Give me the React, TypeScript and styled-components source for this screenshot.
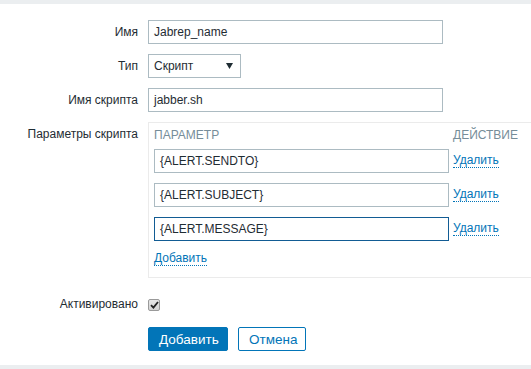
import { Fragment } from 'react';
import styled, { createGlobalStyle } from 'styled-components';

const GlobalStyle = createGlobalStyle`
  html, body {
    margin: 0;
    padding: 0;
    overflow: hidden;
    background-color: #ebeef0;
    font-family: "Liberation Sans", Arial, sans-serif;
    font-size: 12px;
    color: #1f2c33;
  }
`;

const Panel = styled.div`
  margin-top: 4px;
  height: 361px;
  box-sizing: border-box;
  background-color: #fff;
  padding-top: 16px;
  overflow: hidden;
`;

const Form = styled.div`
  display: grid;
  grid-template-columns: 138px 1fr;
  column-gap: 10px;
  row-gap: 10px;
`;

const Label = styled.div<{ $offset?: number }>`
  text-align: right;
  line-height: 24px;
  white-space: nowrap;
  margin-top: ${(p) => p.$offset || 0}px;
`;

const Field = styled.div<{ $offset?: number }>`
  display: flex;
  align-items: center;
  min-height: 24px;
  margin-top: ${(p) => p.$offset || 0}px;
`;

const TextBox = styled.div<{ $width: number; $focused?: boolean }>`
  box-sizing: border-box;
  width: ${(p) => p.$width}px;
  height: 24px;
  line-height: 22px;
  padding: 0 5px;
  border: 1px solid ${(p) => (p.$focused ? '#125c94' : '#acbbc2')};
  background: #fff;
  white-space: nowrap;
`;

const Select = styled.div`
  box-sizing: border-box;
  width: 93px;
  height: 24px;
  padding: 0 7px 0 5px;
  border: 1px solid #acbbc2;
  display: flex;
  align-items: center;
  justify-content: space-between;
`;

const ParamBox = styled.div`
  box-sizing: border-box;
  width: 420px;
  border: 1px solid #ebebeb;
  padding: 4px 0 11px 5px;
`;

const ParamGrid = styled.div`
  display: grid;
  grid-template-columns: 295px 1fr;
  column-gap: 4px;
  row-gap: 10px;
  align-items: center;
`;

const HeadCell = styled.div`
  line-height: 16px;
  margin-bottom: -4px;
  color: #768d99;
  text-transform: uppercase;
`;

const Link = styled.span`
  color: #0275b8;
  border-bottom: 1px dotted #0275b8;
  line-height: 13px;
  justify-self: start;
`;

const AddLink = styled(Link)`
  display: inline-block;
  margin-top: 1px;
`;

const Check = styled.div`
  box-sizing: border-box;
  width: 12px;
  height: 12px;
  margin-top: 1px;
  border: 1px solid #9a9a9a;
  border-radius: 2px;
  background: linear-gradient(#e6e6e6, #d4d4d4);
  display: flex;
  align-items: center;
  justify-content: center;
`;

const Buttons = styled.div`
  display: flex;
  gap: 10px;
  margin-top: 1px;
`;

const Button = styled.button<{ $primary?: boolean }>`
  box-sizing: border-box;
  height: 24px;
  padding: 0 10px;
  font-family: "Liberation Sans", Arial, sans-serif;
  font-size: 13.5px;
  border-radius: 2px;
  border: 1px solid #0275b8;
  background: ${(p) => (p.$primary ? '#0275b8' : '#fff')};
  color: ${(p) => (p.$primary ? '#fff' : '#0275b8')};
  width: ${(p) => (p.$primary ? 80 : 68)}px;
`;

const params = ['{ALERT.SENDTO}', '{ALERT.SUBJECT}', '{ALERT.MESSAGE}'];

export default function App() {
  return (
    <>
      <GlobalStyle />
      <Panel>
        <Form>
          <Label>Имя</Label>
          <Field>
            <TextBox $width={295}>Jabrep_name</TextBox>
          </Field>

          <Label>Тип</Label>
          <Field>
            <Select>
              <span>Скрипт</span>
              <svg width="7" height="6" viewBox="0 0 7 6">
                <path d="M0 0H7L3.5 6Z" fill="#1f2c33" />
              </svg>
            </Select>
          </Field>

          <Label>Имя скрипта</Label>
          <Field>
            <TextBox $width={295}>jabber.sh</TextBox>
          </Field>

          <Label>Параметры скрипта</Label>
          <div>
            <ParamBox>
              <ParamGrid>
                <HeadCell>Параметр</HeadCell>
                <HeadCell>Действие</HeadCell>
                {params.map((p, i) => (
                  <Fragment key={p}>
                    <TextBox $width={295} $focused={i === 2}>
                      {p}
                    </TextBox>
                    <Link>Удалить</Link>
                  </Fragment>
                ))}
                <div>
                  <AddLink>Добавить</AddLink>
                </div>
              </ParamGrid>
            </ParamBox>
          </div>

          <Label $offset={4}>Активировано</Label>
          <Field $offset={4}>
            <Check>
              <svg width="9" height="8" viewBox="0 0 9 8">
                <path d="M1 4.2L3.4 6.6L8 1" stroke="#222" strokeWidth="1.8" fill="none" />
              </svg>
            </Check>
          </Field>

          <div />
          <Buttons>
            <Button $primary>Добавить</Button>
            <Button>Отмена</Button>
          </Buttons>
        </Form>
      </Panel>
    </>
  );
}
